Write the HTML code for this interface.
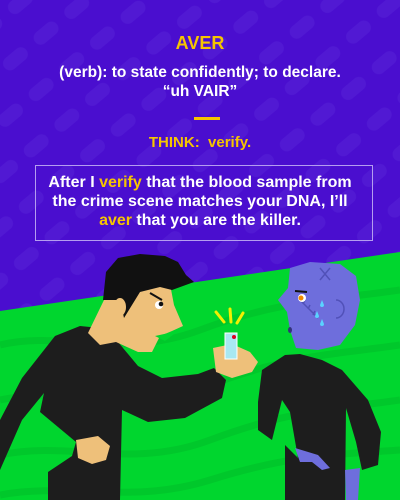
<!DOCTYPE html>
<html><head><meta charset="utf-8"><style>
html,body{margin:0;padding:0}
body{width:400px;height:500px;position:relative;overflow:hidden;background:#4a0ecf;font-family:"Liberation Sans",sans-serif}
svg{position:absolute;left:0;top:0}
.t{position:absolute;left:0;width:400px;text-align:center;color:#fff;font-weight:bold}
.y{color:#f6c500}
</style></head><body>
<svg width="400" height="500" viewBox="0 0 400 500">
<defs><pattern id="p" width="40" height="40" patternUnits="userSpaceOnUse" patternTransform="rotate(-40)">
<rect x="0" y="8" width="28" height="14" rx="7" fill="#5119d3"/></pattern></defs>
<rect width="400" height="500" fill="url(#p)"/>
<polygon points="0,311 400,252 400,500 0,500" fill="#00d62e"/>
<g fill="none" stroke="#00c82b" stroke-width="7">
<path d="M0,345 C60,330 120,360 200,330 S330,300 400,290"/>
<path d="M0,400 C70,385 130,415 210,385 S330,355 400,345"/>
<path d="M0,455 C70,440 130,470 210,440 S330,410 400,400"/>
<path d="M0,495 C70,482 130,505 210,480 S330,455 400,450"/>
</g>
<path d="M0,470 L0,420 L22,378 L55,336 L80,326 L100,328 L118,342 L138,366 L162,378 L198,374 L214,368 L226,380 L222,398 L185,418 L148,422 L122,410 L120,500 L48,500 L48,472 L72,456 L76,442 L40,412 L44,393 L22,420 Z" fill="#1d1d1d"/>
<path d="M88,333 L104,300 L170,284 L174,305 L183,326 L172,331 L160,336 L152,352 L138,352 L116,342 L100,345 Z" fill="#eec07a"/>
<path d="M155,336 L178,331 L165,341 Z" fill="#00d62e"/>
<path d="M103,300 L106,272 L118,258 L140,254 L165,256 L178,262 L186,275 L194,282 L172,290 L160,287 L140,292 L124,318 L120,300 Z" fill="#111"/>
<ellipse cx="120" cy="307" rx="6" ry="9" fill="#eec07a"/>
<path d="M150,293 L162,300" stroke="#111" stroke-width="2"/>
<ellipse cx="159" cy="305" rx="4" ry="4" fill="#fff"/><circle cx="161" cy="304" r="2.3" fill="#111"/>
<path d="M213,348 L232,344 L250,352 L258,362 L252,372 L232,378 L216,372 Z" fill="#eec07a"/>
<path d="M76,440 L98,436 L110,446 L106,460 L92,464 L78,458 Z" fill="#eec07a"/>
<rect x="225" y="333" width="12" height="26" fill="#a8e8f2" stroke="#fff" stroke-width="1"/>
<circle cx="234" cy="337" r="2" fill="#d02"/>
<path d="M216,312 L224,322 M230,309 L231,322 M243,313 L237,323" stroke="#f3f000" stroke-width="3" stroke-linecap="round"/>
<path d="M262,370 L285,355 L300,354 L322,360 L342,370 L368,400 L381,432 L378,465 L362,470 L356,442 L346,408 L345,500 L285,500 L285,445 L298,458 L290,412 L282,400 L272,440 L258,430 L258,402 Z" fill="#1d1d1d"/>
<path d="M295,448 L318,455 L330,468 L322,470 L312,462 L300,462 Z" fill="#6e6edc"/>
<path d="M345,470 L360,468 L358,500 L346,500 Z" fill="#6e6edc"/>
<path d="M290,268 L310,262 L340,264 L356,276 L360,300 L355,325 L340,345 L318,350 L296,348 L290,330 L287,312 L278,300 L288,288 Z" fill="#6e6edc"/>
<path d="M320,268 L330,280 M330,268 L320,280" stroke="#5151b8" stroke-width="1.5"/>
<path d="M300,300 L318,318 M305,300 L303,304 M310,305 L308,309 M315,311 L313,315" stroke="#5151b8" stroke-width="1.5"/>
<path d="M336,300 A8,9 0 1 1 336,318" fill="none" stroke="#5151b8" stroke-width="1.5"/>
<circle cx="302" cy="298" r="4" fill="#fff"/><circle cx="301" cy="298" r="2.5" fill="#f08a00"/>
<path d="M295,291 L307,292" stroke="#111" stroke-width="2"/>
<path d="M322,300 l2,5 a2,2 0 1 1 -4,0 z M317,311 l2,5 a2,2 0 1 1 -4,0z M322,319 l2,5 a2,2 0 1 1 -4,0z" fill="#5ad2ff"/>
<ellipse cx="290" cy="330" rx="2" ry="3" fill="#33337a"/>
</svg>
<div class="t y" style="top:33px;font-size:18px">AVER</div>
<div class="t" style="top:63px;font-size:15.5px;line-height:19px">(verb): to state confidently; to declare.<br>“uh VAIR”</div>
<div style="position:absolute;left:194px;top:117px;width:26px;height:3px;background:#f6c500"></div>
<div class="t y" style="top:134px;font-size:15px">THINK:&nbsp; verify.</div>
<div style="position:absolute;left:35px;top:165px;width:336px;height:74px;border:1px solid #b59df0"></div>
<div class="t" style="top:173px;font-size:16px;line-height:19px">After I <span class="y">verify</span> that the blood sample from<br>the crime scene matches your DNA, I’ll<br><span class="y">aver</span> that you are the killer.</div>
</body></html>
